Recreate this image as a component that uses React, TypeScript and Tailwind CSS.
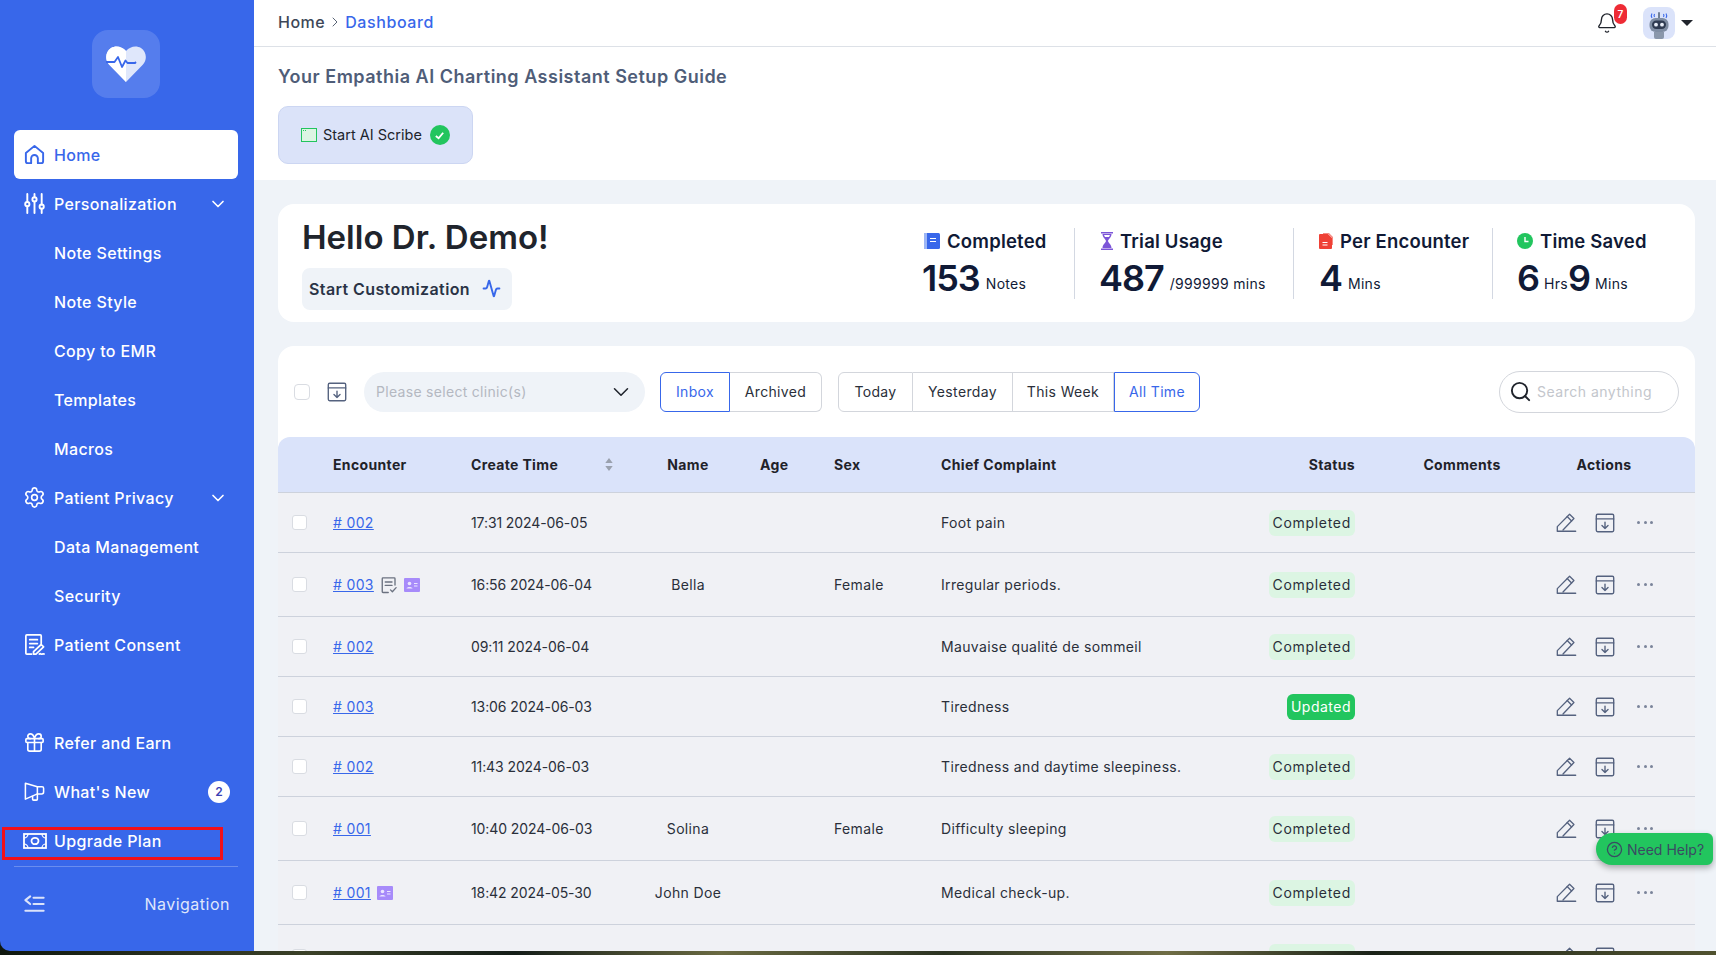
import { Activity, Bell, ChevronDown, ChevronRight, CircleHelp, Gift, Search, Settings } from "lucide-react"

type RowData = {
  h: string
  id: string
  note?: boolean
  badge?: boolean
  time: string
  name?: string
  sex?: string
  complaint?: string
  status: string
}

const rows: RowData[] = [
  { h: "h-[60px]", id: "# 002", time: "17:31 2024-06-05", complaint: "Foot pain", status: "Completed" },
  { h: "h-[64px]", id: "# 003", note: true, badge: true, time: "16:56 2024-06-04", name: "Bella", sex: "Female", complaint: "Irregular periods.", status: "Completed" },
  { h: "h-[60px]", id: "# 002", time: "09:11 2024-06-04", complaint: "Mauvaise qualité de sommeil", status: "Completed" },
  { h: "h-[60px]", id: "# 003", time: "13:06 2024-06-03", complaint: "Tiredness", status: "Updated" },
  { h: "h-[60px]", id: "# 002", time: "11:43 2024-06-03", complaint: "Tiredness and daytime sleepiness.", status: "Completed" },
  { h: "h-[64px]", id: "# 001", time: "10:40 2024-06-03", name: "Solina", sex: "Female", complaint: "Difficulty sleeping", status: "Completed" },
  { h: "h-[64px]", id: "# 001", badge: true, time: "18:42 2024-05-30", name: "John Doe", complaint: "Medical check-up.", status: "Completed" },
  { h: "h-[64px]", id: "# 001", time: "16:20 2024-05-30", status: "Completed" },
]

const cols = "grid grid-cols-[55px_138px_169px_96px_98px_107px_329px_85px_35px_144px_140px_21px] items-center"

function HomeIcon() {
  return (
    <svg viewBox="0 0 24 24" className="h-[23px] w-[23px]" fill="none" stroke="#3867ea" strokeWidth="2" strokeLinejoin="round">
      <path d="M3 10.5 12 3l9 7.5V19a2 2 0 0 1-2 2h-3.5v-5a3.5 3.5 0 0 0-7 0v5H5a2 2 0 0 1-2-2z" />
    </svg>
  )
}

function SlidersIcon() {
  return (
    <svg viewBox="0 0 24 24" className="h-[23px] w-[23px]" fill="none" stroke="white" strokeWidth="2" strokeLinecap="round">
      <path d="M4.5 2v8.5M4.5 15v7M12 2v3.500M12 10v12M19.500 2v11M19.500 17.500V22" />
      <circle cx="4.500" cy="12.700" r="2.200" />
      <circle cx="12" cy="7.700" r="2.200" />
      <circle cx="19.500" cy="15.300" r="2.200" />
    </svg>
  )
}

function ConsentIcon() {
  return (
    <svg viewBox="0 0 24 24" className="h-[23px] w-[23px]" fill="none" stroke="white" strokeWidth="1.800" strokeLinecap="round" strokeLinejoin="round">
      <path d="M9 22H4a1 1 0 0 1-1-1V3a1 1 0 0 1 1-1h14a1 1 0 0 1 1 1v8" />
      <path d="M7 7h8M7 11h8M7 15h4" />
      <path d="M11 19.500l8-7.500 2.500 2.500-8 7.500H11z" />
      <path d="M17 22c1.500-1.200 2 .8 3.200 0 .6-.4 1.200-.4 1.800 0" />
    </svg>
  )
}

function MegaphoneIcon() {
  return (
    <svg viewBox="0 0 24 24" className="h-[23px] w-[23px]" fill="none" stroke="white" strokeWidth="1.600" strokeLinejoin="round">
      <path d="M2.500 3.500 15 7h5a1.500 1.500 0 0 1 1.500 1.500v4a2 2 0 0 1-2 2H15L2.500 20z" />
      <path d="M15 7v7.500M10 16.500V20a1 1 0 0 0 1 1h3a1 1 0 0 0 1-1v-5.500" />
    </svg>
  )
}

function CashIcon() {
  return (
    <svg viewBox="0 0 24 24" className="h-[24px] w-[24px]" fill="none" stroke="white" strokeWidth="1.800">
      <rect x="1" y="5" width="22" height="14" />
      <ellipse cx="12" cy="12" rx="3.500" ry="3.200" />
      <path d="M1 9a4 4 0 0 0 4-4M19 5a4 4 0 0 0 4 4M1 15a4 4 0 0 1 4 4M19 19a4 4 0 0 1 4-4" strokeWidth="1.200" />
    </svg>
  )
}

function CollapseIcon() {
  return (
    <svg viewBox="0 0 24 24" className="h-[23px] w-[23px]" fill="none" stroke="#dbe3fa" strokeWidth="2.200" strokeLinecap="round" strokeLinejoin="round">
      <path d="M7.500 3.500 2.500 7.500l5 4M11 5h10.500M11 11.500h10.500M2.500 18.500h19" />
    </svg>
  )
}

function ArchiveIcon() {
  return (
    <svg viewBox="0 0 24 24" className="h-[22px] w-[22px]" fill="none" stroke="#55627f" strokeWidth="1.500" strokeLinecap="round" strokeLinejoin="round">
      <rect x="2.500" y="2.500" width="19" height="19" rx="1.500" />
      <path d="M2.500 7.500h19M12 11v7M8.700 14.800 12 18l3.300-3.200" />
    </svg>
  )
}

function PencilIcon() {
  return (
    <svg viewBox="0 0 24 24" className="h-[21px] w-[21px]" fill="none" stroke="#55627f" strokeWidth="1.500" strokeLinecap="round" strokeLinejoin="round">
      <path d="M1.500 21.500v-4.800L15.500 2.500l5 5L8 20.500" />
      <path d="M12.800 5.200l5 5M1.500 22h21" />
    </svg>
  )
}

function NoteCheckIcon() {
  return (
    <svg viewBox="0 0 24 24" className="h-[18px] w-[18px]" fill="none" stroke="#6b7280" strokeWidth="1.800" strokeLinecap="round" strokeLinejoin="round">
      <path d="M20 12V3.500a1 1 0 0 0-1-1H4a1 1 0 0 0-1 1V21a1 1 0 0 0 1 1h7" />
      <path d="M7 8h9M7 12.500h9M14 18.500l2.500 2.500 5-5.500" />
    </svg>
  )
}

function PersonBadge() {
  return (
    <svg viewBox="0 0 16 14" className="h-[14px] w-[16px]">
      <rect width="16" height="14" rx="1" fill="#a78bfa" />
      <circle cx="5.500" cy="5.500" r="1.800" fill="#ece6ff" />
      <path d="M2.500 10.500c.4-2 5.600-2 6 0z" fill="#ece6ff" />
      <path d="M10 5.500h3.500M10 8h3.500" stroke="#ece6ff" strokeWidth="1" />
    </svg>
  )
}

function HeartLogo() {
  return (
    <svg viewBox="0 0 40 36" className="h-[36px] w-[40px]">
      <defs>
        <clipPath id="left-half">
          <rect x="0" y="0" width="20" height="36" />
        </clipPath>
      </defs>
      <path d="M20 36 3 18.500C-1.500 13.500-.5 5.500 5 2c5-3 11-1.500 15 3 4-4.500 10-6 15-3 5.500 3.500 6.500 11.500 2 16.500z" fill="#dfe7fb" />
      <path d="M20 36 3 18.500C-1.500 13.500-.5 5.500 5 2c5-3 11-1.500 15 3 4-4.500 10-6 15-3 5.500 3.500 6.500 11.500 2 16.500z" fill="white" clipPath="url(#left-half)" />
      <path d="M0 16h8.500l3.500-5 4 10 3.500-6.500 2 2.500h7.500l1-1" fill="none" stroke="#3867ea" strokeWidth="1.800" strokeLinejoin="round" />
    </svg>
  )
}

function RobotAvatar() {
  return (
    <div className="flex h-[32px] w-[32px] items-center justify-center rounded-lg bg-[#dbe3fa]">
      <svg viewBox="0 0 32 32" className="h-[32px] w-[32px]">
        <path d="M9 6.500c-1 1.500-1 3 0 4.500M23 6.500c1 1.500 1 3 0 4.500M11.500 7c-.6 1-.6 2 0 3M20.500 7c.6 1 .6 2 0 3" fill="none" stroke="#3867ea" strokeWidth="1.100" />
        <rect x="15" y="5" width="2" height="7" rx="1" fill="#6f7f96" />
        <rect x="6.500" y="11" width="19" height="14" rx="6" fill="#7f8da3" />
        <rect x="9" y="13.500" width="14" height="8.500" rx="4.200" fill="#2f3b52" />
        <circle cx="13" cy="17.700" r="1.900" fill="#e8edf8" />
        <circle cx="19" cy="17.700" r="1.900" fill="#e8edf8" />
        <path d="M11 25h10v5a2 2 0 0 1-2 2h-6a2 2 0 0 1-2-2z" fill="#8a97ab" />
      </svg>
    </div>
  )
}

function NavItem({ icon, label, chevron, badge }: { icon?: React.ReactNode; label: string; chevron?: boolean; badge?: string }) {
  return (
    <div className="flex h-[49px] items-center pl-[23px] pr-[24px] text-white">
      <span className="flex w-[31px] shrink-0 items-center">{icon}</span>
      <span className="text-[16px] font-medium tracking-[0.35px]">{label}</span>
      {chevron && <ChevronDown className="ml-auto mr-[2px] h-[20px] w-[20px]" strokeWidth={2} />}
      {badge && (
        <span className="ml-auto flex h-[22px] w-[22px] items-center justify-center rounded-full bg-white text-[12px] font-semibold text-[#3b3fb5]">
          {badge}
        </span>
      )}
    </div>
  )
}

function Sidebar() {
  return (
    <aside className="flex w-[254px] shrink-0 flex-col rounded-bl-[10px] bg-[#3867ea]">
      <div className="flex justify-center pr-[2px] pt-[30px]">
        <div className="flex h-[68px] w-[68px] items-center justify-center rounded-[16px] bg-white/15">
          <HeartLogo />
        </div>
      </div>
      <div className="ml-[14px] mr-[16px] mt-[32px] flex h-[49px] items-center rounded-[6px] bg-white pl-[9px] text-[#3867ea]">
        <span className="flex w-[31px] items-center">
          <HomeIcon />
        </span>
        <span className="text-[16px] font-medium tracking-[0.35px]">Home</span>
      </div>
      <NavItem icon={<SlidersIcon />} label="Personalization" chevron />
      <NavItem label="Note Settings" />
      <NavItem label="Note Style" />
      <NavItem label="Copy to EMR" />
      <NavItem label="Templates" />
      <NavItem label="Macros" />
      <NavItem icon={<Settings className="h-[23px] w-[23px]" strokeWidth={1.7} />} label="Patient Privacy" chevron />
      <NavItem label="Data Management" />
      <NavItem label="Security" />
      <NavItem icon={<ConsentIcon />} label="Patient Consent" />
      <div className="h-[49px]" />
      <NavItem icon={<Gift className="h-[23px] w-[23px]" strokeWidth={1.7} />} label="Refer and Earn" />
      <NavItem icon={<MegaphoneIcon />} label="What's New" badge="2" />
      <div className="relative">
        <NavItem icon={<CashIcon />} label="Upgrade Plan" />
        <div className="absolute left-[2px] top-[11px] h-[33px] w-[221px] border-[3px] border-[#f3101c]" />
      </div>
      <div className="ml-[14px] mr-[16px] mt-[1px] border-t border-white/25" />
      <div className="flex h-[74px] items-center pl-[23px] pr-[24px] text-[#dfe6fb]">
        <CollapseIcon />
        <span className="ml-auto text-[16px] tracking-[0.5px]">Navigation</span>
      </div>
    </aside>
  )
}

function StatHead({ icon, label }: { icon: React.ReactNode; label: string }) {
  return (
    <div className="flex items-center gap-[7px] text-[18.500px] font-semibold tracking-[0.2px] text-[#101a36]">
      {icon}
      <span>{label}</span>
    </div>
  )
}

function StatNumber({ children }: { children: React.ReactNode }) {
  return <span className="text-[36px] font-semibold leading-[44px] tracking-[-1px]">{children}</span>
}

function StatUnit({ children }: { children: React.ReactNode }) {
  return <span className="pb-[6px] text-[14px] leading-[20px] tracking-[0.3px]">{children}</span>
}

function Stats() {
  return (
    <div className="ml-auto flex items-center">
      <div className="h-[71px] w-[152px]">
        <div className="pl-[2px]">
          <StatHead
            label="Completed"
            icon={
              <svg viewBox="0 0 16 16" className="h-[16px] w-[16px]">
                <rect width="16" height="16" rx="1.500" fill="#3867ea" />
                <rect x="0" width="3" height="16" fill="#9db6f5" />
                <path d="M6 5.500h6M6 8.500h6" stroke="white" strokeWidth="1.200" />
              </svg>
            }
          />
        </div>
        <div className="mt-[1px] flex items-end gap-[6px] text-[#101a36]">
          <StatNumber>153</StatNumber>
          <StatUnit>Notes</StatUnit>
        </div>
      </div>
      <div className="h-[71px] w-[219px] border-l border-[#d3d8e2] pl-[24px]">
        <div className="pl-[2px]">
          <StatHead
            label="Trial Usage"
            icon={
              <svg viewBox="0 0 12 18" className="h-[18px] w-[12px]">
                <path d="M0 .5h12M0 17.500h12" stroke="#7c55d8" strokeWidth="1.800" />
                <path d="M1.500 2h9c0 3.500-3 5-3.500 7 .5 2 3.500 3.500 3.500 7h-9c0-3.500 3-5 3.500-7-.5-2-3.500-3.500-3.500-7z" fill="#7c55d8" />
                <path d="M3 3h6l-1 2H4z" fill="#ffffff" />
              </svg>
            }
          />
        </div>
        <div className="mt-[1px] flex items-end gap-[6px] text-[#101a36]">
          <StatNumber>487</StatNumber>
          <StatUnit>/999999 mins</StatUnit>
        </div>
      </div>
      <div className="h-[71px] w-[199px] border-l border-[#d3d8e2] pl-[25px]">
        <StatHead
          label="Per Encounter"
          icon={
            <svg viewBox="0 0 14 16" className="h-[16px] w-[14px]">
              <path d="M1 1h8l4 4v10a1 1 0 0 1-1 1H1a1 1 0 0 1-1-1V2a1 1 0 0 1 1-1z" fill="#ef4136" />
              <path d="M4 0h6l4 4v8h-1V5L9 1H4z" fill="#f58a82" />
              <path d="M3.500 9.500h5M3.500 12h5" stroke="white" strokeWidth="1.100" />
            </svg>
          }
        />
        <div className="mt-[1px] flex items-end gap-[6px] text-[#101a36]">
          <StatNumber>4</StatNumber>
          <StatUnit>Mins</StatUnit>
        </div>
      </div>
      <div className="h-[71px] w-[203px] border-l border-[#d3d8e2] pl-[24px]">
        <StatHead
          label="Time Saved"
          icon={
            <svg viewBox="0 0 16 16" className="h-[16px] w-[16px]">
              <circle cx="8" cy="8" r="8" fill="#22c55e" />
              <path d="M8 4v4.500h3.500" fill="none" stroke="white" strokeWidth="1.400" />
            </svg>
          }
        />
        <div className="mt-[1px] flex items-end text-[#101a36]">
          <StatNumber>6</StatNumber>
          <span className="ml-[5px] flex">
            <StatUnit>Hrs</StatUnit>
          </span>
          <StatNumber>9</StatNumber>
          <span className="ml-[5px] flex">
            <StatUnit>Mins</StatUnit>
          </span>
        </div>
      </div>
    </div>
  )
}

function Segment({ label, active, className }: { label: string; active?: boolean; className: string }) {
  return (
    <div
      className={`flex h-[40px] items-center justify-center border text-[14px] tracking-[0.35px] ${
        active ? "border-[#3867ea] text-[#3867ea]" : "border-[#d3d6dc] text-[#2a2f3a]"
      } ${className}`}
    >
      {label}
    </div>
  )
}

function FilterBar() {
  return (
    <div className="flex h-[91px] items-center pl-[16px] pr-[16px]">
      <div className="h-[16px] w-[16px] rounded-[4px] border border-[#d9dce2] bg-white" />
      <div className="ml-[16px]">
        <ArchiveIcon />
      </div>
      <div className="ml-[16px] flex h-[40px] w-[281px] items-center justify-between rounded-[20px] bg-[#eff3f8] pl-[12px] pr-[11px]">
        <span className="text-[14px] tracking-[0.3px] text-[#b4b8c1]">Please select clinic(s)</span>
        <ChevronDown className="h-[26px] w-[26px] text-[#20242c]" strokeWidth={1.4} />
      </div>
      <div className="ml-[15px] flex">
        <Segment label="Inbox" active className="w-[70px] rounded-l-[6px]" />
        <Segment label="Archived" className="w-[92px] rounded-r-[6px] border-l-0" />
      </div>
      <div className="ml-[16px] flex">
        <Segment label="Today" className="w-[75px] rounded-l-[6px]" />
        <Segment label="Yesterday" className="w-[100px] border-l-0" />
        <Segment label="This Week" className="w-[101px] border-l-0" />
        <Segment label="All Time" active className="w-[86px] rounded-r-[6px]" />
      </div>
      <div className="ml-auto flex h-[42px] w-[180px] items-center rounded-[21px] border border-[#d3d6dc] pl-[9px]">
        <Search className="h-[23px] w-[23px] text-[#20242c]" strokeWidth={2} />
        <span className="ml-[5px] text-[14px] tracking-[0.5px] text-[#c3c6cc]">Search anything</span>
      </div>
    </div>
  )
}

function TableHeader() {
  return (
    <div className={`${cols} h-[56px] rounded-t-[12px] border-b border-[#cdd2dc] bg-[#dae3fa] text-[14px] font-bold tracking-[0.35px] text-[#1f2229]`}>
      <div className="col-start-2">Encounter</div>
      <div className="flex items-center">
        Create Time
        <svg viewBox="0 0 8 14" className="ml-[47px] h-[13px] w-[8px]" fill="#9aa1ae">
          <path d="M4 0 8 5.500H0zM4 14 0 8.500h8z" />
        </svg>
      </div>
      <div className="text-center">Name</div>
      <div className="pl-[24px]">Age</div>
      <div>Sex</div>
      <div>Chief Complaint</div>
      <div className="text-right">Status</div>
      <div className="col-start-10 text-center">Comments</div>
      <div className="text-center">Actions</div>
    </div>
  )
}

function TableRow({ row }: { row: RowData }) {
  return (
    <div className={`${cols} ${row.h} border-b border-[#cdd2dc] text-[14px] tracking-[0.35px] text-[#2a2f3a]`}>
      <div className="pl-[14px]">
        <div className="h-[15px] w-[15px] rounded-[3px] border border-[#d9dce2] bg-white" />
      </div>
      <div className="flex items-center gap-[6px]">
        <span className="text-[#3867ea] underline">{row.id}</span>
        {row.note && <NoteCheckIcon />}
        {row.badge && <PersonBadge />}
      </div>
      <div className="tracking-[-0.1px]">{row.time}</div>
      <div className="text-center">{row.name}</div>
      <div />
      <div>{row.sex}</div>
      <div>{row.complaint}</div>
      <div className="flex justify-end">
        {row.status === "Updated" ? (
          <span className="flex h-[26px] items-center rounded-[6px] bg-[#22c55e] px-[4px] tracking-[0.5px] text-white">{row.status}</span>
        ) : (
          <span className="flex h-[26px] items-center rounded-[6px] bg-[#dcf5e3] px-[4px] tracking-[0.7px]">{row.status}</span>
        )}
      </div>
      <div className="col-start-11 flex items-center pl-[22px]">
        <PencilIcon />
        <span className="ml-[17px]">
          <ArchiveIcon />
        </span>
        <span className="ml-[21px] flex gap-[3.500px]">
          <span className="h-[3px] w-[3px] rounded-full bg-[#7a849a]" />
          <span className="h-[3px] w-[3px] rounded-full bg-[#7a849a]" />
          <span className="h-[3px] w-[3px] rounded-full bg-[#7a849a]" />
        </span>
      </div>
    </div>
  )
}

export default function App() {
  return (
    <div className="flex h-[955px] w-[1716px] flex-col overflow-hidden bg-[linear-gradient(90deg,#10180f_0%,#3b4128_18%,#141d18_30%,#6a6a42_42%,#2b3322_55%,#6f6d45_68%,#1a2218_80%,#50522f_100%)] font-['Inter',sans-serif]">
      <div className="relative flex h-[951px] w-full">
        <Sidebar />
        <main className="min-w-0 flex-1 overflow-hidden bg-[#eff3f8]">
          <header className="flex h-[47px] items-center border-b border-[#dde1e7] bg-white pb-[2px] pl-[24px] pr-[23px]">
            <span className="text-[16px] font-medium tracking-[0.5px] text-[#3d4758]">Home</span>
            <ChevronRight className="mx-[2px] h-[16px] w-[16px] text-[#5a6476]" strokeWidth={1.5} />
            <span className="text-[16px] font-medium tracking-[0.6px] text-[#3867ea]">Dashboard</span>
            <div className="relative ml-auto mt-[2px]">
              <Bell className="h-[22px] w-[22px] text-[#20242c]" strokeWidth={1.5} />
              <span className="absolute left-[18px] top-[-8px] flex h-[20px] w-[13px] items-center justify-center rounded-full bg-[#ee2b35] text-[10px] font-semibold text-white">
                7
              </span>
            </div>
            <div className="ml-[25px] mt-[2px]">
              <RobotAvatar />
            </div>
            <div className="ml-[6px] mt-[2px] h-0 w-0 border-x-[6px] border-t-[6px] border-x-transparent border-t-[#20242c]" />
          </header>
          <section className="h-[133px] bg-white px-[24px] pt-[18px]">
            <h2 className="text-[18px] font-semibold leading-[24px] tracking-[0.5px] text-[#4f5d78]">Your Empathia AI Charting Assistant Setup Guide</h2>
            <div className="mt-[17px] flex h-[58px] w-[195px] items-center rounded-[10px] border border-[#ccd6f2] bg-[#dbe3f9] pl-[22px]">
              <svg viewBox="0 0 16 14" className="h-[14px] w-[16px]">
                <rect x=".5" y=".5" width="15" height="13" fill="#dcf5e3" stroke="#22c55e" />
                <path d="M2 2.500h1M4 2.500h1" stroke="#22c55e" />
              </svg>
              <span className="ml-[6px] text-[14.500px] text-[#20242c]">Start AI Scribe</span>
              <span className="ml-[8px] flex h-[20px] w-[20px] items-center justify-center rounded-full bg-[#22c55e]">
                <svg viewBox="0 0 12 12" className="h-[11px] w-[11px]" fill="none" stroke="white" strokeWidth="2">
                  <path d="M2 6.500 5 9l5-6" />
                </svg>
              </span>
            </div>
          </section>
          <div className="pl-[24px] pr-[21px] pt-[24px]">
            <section className="flex h-[118px] items-center rounded-[16px] bg-white pl-[24px]">
              <div>
                <h1 className="text-[33px] font-semibold leading-[40px] text-[#20242c]">Hello Dr. Demo!</h1>
                <div className="mt-[11px] flex h-[42px] w-[210px] items-center rounded-[8px] bg-[#eff3f8] pl-[7px]">
                  <span className="text-[16px] font-semibold tracking-[0.4px] text-[#2a3346]">Start Customization</span>
                  <Activity className="ml-auto mr-[11px] h-[19px] w-[19px] text-[#3867ea]" strokeWidth={2.4} />
                </div>
              </div>
              <Stats />
            </section>
            <section className="mt-[24px] rounded-t-[16px] bg-white">
              <FilterBar />
              <TableHeader />
              <div className="bg-[#f0f1f5]">
                {rows.map((row, i) => (
                  <TableRow key={i} row={row} />
                ))}
              </div>
            </section>
          </div>
        </main>
        <div className="absolute left-[1596px] top-[833px] flex h-[32px] w-[117px] items-center rounded-l-[16px] rounded-r-[6px] bg-[#22c55e] pl-[10px] text-[14px] text-[#3a4a63] shadow-[0_3px_6px_rgba(0,0,0,0.3)]">
          <CircleHelp className="h-[17px] w-[17px]" strokeWidth={1.8} />
          <span className="ml-[4px]">Need Help?</span>
        </div>
      </div>
    </div>
  )
}
